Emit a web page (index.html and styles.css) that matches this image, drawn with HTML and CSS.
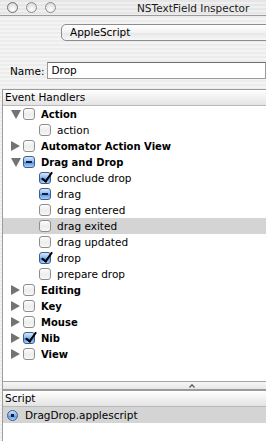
FILE: index.html
```html
<!DOCTYPE html>
<html lang="en">
<head>
  <meta charset="UTF-8" />
  <title>NSTextField Inspector</title>
  <link rel="stylesheet" href="styles.css">
</head>
<body>
  <div class="window">
    <div class="titlebar">
      <span class="light"></span>
      <span class="light"></span>
      <span class="light"></span>
      <span class="title">NSTextField Inspector</span>
    </div>

    <div class="panel">
      <div class="popup">AppleScript</div>
      <div class="name-row">
        <label>Name:</label>
        <div class="field">Drop</div>
      </div>
    </div>

    <div class="lower">
      <div class="col-header">Event Handlers</div>
      <ul class="outline">
        <li class="row group"><span class="tri down"></span><span class="check"></span>Action</li>
        <li class="row child"><span class="check"></span>action</li>
        <li class="row group"><span class="tri right"></span><span class="check"></span>Automator Action View</li>
        <li class="row group"><span class="tri down"></span><span class="check mixed"></span>Drag and Drop</li>
        <li class="row child"><span class="check on"></span>conclude drop</li>
        <li class="row child"><span class="check mixed"></span>drag</li>
        <li class="row child"><span class="check"></span>drag entered</li>
        <li class="row child selected"><span class="check"></span>drag exited</li>
        <li class="row child"><span class="check"></span>drag updated</li>
        <li class="row child"><span class="check on"></span>drop</li>
        <li class="row child"><span class="check"></span>prepare drop</li>
        <li class="row group"><span class="tri right"></span><span class="check"></span>Editing</li>
        <li class="row group"><span class="tri right"></span><span class="check"></span>Key</li>
        <li class="row group"><span class="tri right"></span><span class="check"></span>Mouse</li>
        <li class="row group"><span class="tri right"></span><span class="check on"></span>Nib</li>
        <li class="row group"><span class="tri right"></span><span class="check"></span>View</li>
      </ul>

      <div class="splitter">
        <svg width="6" height="4" viewBox="0 0 6 4"><path d="M0.5 3.5 L3 0.8 L5.5 3.5" fill="none" stroke="#555" stroke-width="1.2"/></svg>
      </div>

      <div class="col-header">Script</div>
      <ul class="scripts">
        <li class="row selected"><span class="radio"></span>DragDrop.applescript</li>
      </ul>
    </div>
  </div>
</body>
</html>
```

FILE: styles.css
```css
body {
  margin: 0;
  background: #fff;
  font-family: "DejaVu Sans", sans-serif;
  font-size: 10.5px;
  color: #000;
}

.window {
  width: 266px;
  height: 441px;
  overflow: hidden;
  display: flex;
  flex-direction: column;
  background: repeating-linear-gradient(#ececec 0 2px, #f4f4f4 2px 4px);
}

.titlebar {
  height: 15px;
  border-bottom: 1px solid #9c9c9c;
  display: flex;
  align-items: center;
  padding-left: 7px;
  gap: 8px;
  background: repeating-linear-gradient(#e6e6e6 0 2px, #efefef 2px 4px);
}

.light {
  width: 9px;
  height: 9px;
  border-radius: 50%;
  border: 1px solid #8f8f8f;
  background: radial-gradient(circle at 50% 70%, #ffffff 0, #e4e4e4 60%, #c8c8c8 100%);
  flex-shrink: 0;
}

.light:first-child {
  border-color: #707070;
}

.title {
  margin-left: 73px;
  white-space: nowrap;
  color: #1a1a1a;
}

.panel {
  height: 73px;
  box-sizing: border-box;
  padding-top: 8px;
}

.popup {
  margin-left: 61px;
  width: 240px;
  height: 17px;
  box-sizing: border-box;
  border: 1px solid #8d8d8d;
  border-radius: 5px;
  background: linear-gradient(#ffffff, #f2f2f2 50%, #e6e6e6 51%, #f7f7f7);
  padding-left: 8px;
  line-height: 15px;
  white-space: nowrap;
}

.name-row {
  display: flex;
  align-items: center;
  margin-top: 21px;
}

.name-row label {
  width: 50px;
  box-sizing: border-box;
  padding-left: 10px;
}

.field {
  width: 240px;
  height: 17px;
  box-sizing: border-box;
  border: 1px solid #9a9a9a;
  border-top-color: #6e6e6e;
  background: #fff;
  padding-left: 4px;
  line-height: 15px;
}

.lower {
  flex: 1;
  display: flex;
  flex-direction: column;
  margin-left: 2px;
  border-left: 1px solid #9d9d9d;
  background: #fff;
}

.col-header {
  height: 15px;
  border-top: 1px solid #9a9a9a;
  border-bottom: 1px solid #b9b9b9;
  background: linear-gradient(#ffffff, #f1f1f1 50%, #e4e4e4);
  padding-left: 2px;
  line-height: 15px;
}

ul {
  list-style: none;
  margin: 0;
  padding: 0;
}

.outline {
  height: 275px;
}

.row {
  height: 16px;
  display: flex;
  align-items: center;
  white-space: nowrap;
}

.row.group {
  padding-left: 7px;
  font-weight: bold;
  font-size: 10px;
}

.row.child {
  padding-left: 36px;
}

.row.selected {
  background: #d4d4d4;
}

.tri {
  width: 11px;
  height: 10px;
  margin-right: 2px;
  display: flex;
  align-items: center;
  justify-content: center;
}

.tri::before {
  content: "";
  width: 0;
  height: 0;
}

.tri.down::before {
  border-left: 5px solid transparent;
  border-right: 5px solid transparent;
  border-top: 9px solid #737373;
}

.tri.right::before {
  border-top: 5px solid transparent;
  border-bottom: 5px solid transparent;
  border-left: 9px solid #737373;
}

.check {
  width: 12px;
  height: 12px;
  box-sizing: border-box;
  border: 1px solid #8e8e8e;
  border-radius: 3px;
  background: linear-gradient(#fdfdfd, #ececec 55%, #f8f8f8);
  margin-right: 6px;
  flex-shrink: 0;
  position: relative;
}

.check.on,
.check.mixed {
  border-color: #3d5d8c;
  background: linear-gradient(#d5e6fa, #8ab8ee 50%, #5a98e3 55%, #a8d0fa);
}

.check.mixed::after {
  content: "";
  position: absolute;
  left: 2px;
  right: 2px;
  top: 4px;
  height: 2px;
  background: #10243f;
}

.check.on::after {
  content: "";
  position: absolute;
  left: 4px;
  top: -3px;
  width: 4px;
  height: 10px;
  border-right: 2.5px solid #000;
  border-bottom: 2.5px solid #000;
  transform: rotate(35deg);
}

.splitter {
  height: 7px;
  border-top: 1px solid #a3a3a3;
  border-bottom: 1px solid #9a9a9a;
  background: linear-gradient(#f7f7f7, #e6e6e6);
  display: flex;
  align-items: center;
  padding-left: 186px;
}

.scripts .row {
  padding-left: 4px;
}

.radio {
  width: 11px;
  height: 11px;
  box-sizing: border-box;
  border-radius: 50%;
  border: 1px solid #3d5d8c;
  background: radial-gradient(circle, #0d1d33 0 1.6px, transparent 2px),
              linear-gradient(#d5e6fa, #7fb0ec 50%, #5a98e3 55%, #a8d0fa);
  margin-right: 7px;
  flex-shrink: 0;
}
```
